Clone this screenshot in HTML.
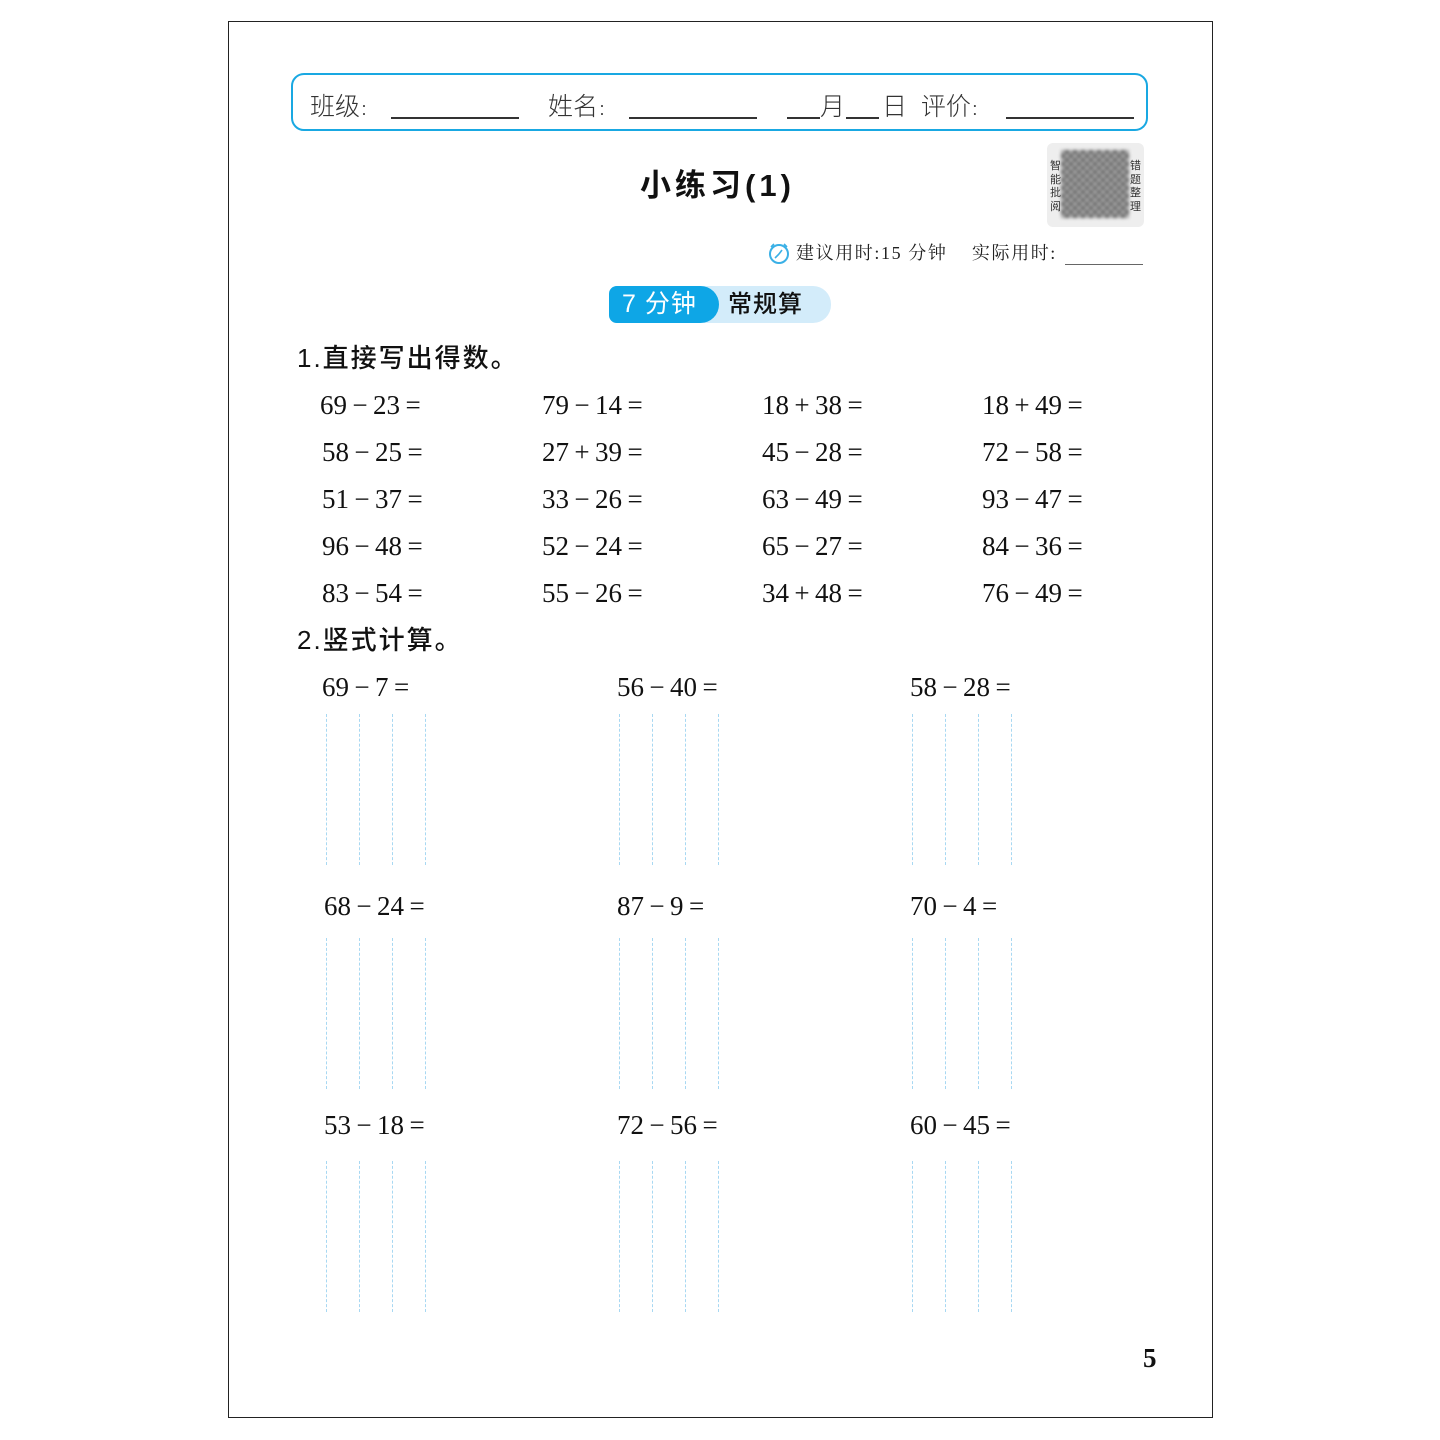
<!DOCTYPE html>
<html><head><meta charset="utf-8"><style>
body{margin:0;width:1440px;height:1440px;background:#fff;position:relative;overflow:hidden;font-family:"Liberation Sans","Noto Sans CJK SC",sans-serif;color:#111}
.a{position:absolute;white-space:nowrap}
.s{font-family:"Liberation Serif","Noto Serif CJK SC",serif;font-size:27px;line-height:30px;color:#111}
.u{position:absolute;height:0;border-top:2px solid #333}
.d{position:absolute;width:0;border-left:1px dashed #a8d8f2}
.h{font-size:25px;line-height:30px;color:#333;font-weight:300}
</style></head><body>
<div class="a" style="left:228px;top:21px;width:983px;height:1395px;border:1px solid #222"></div>
<div class="a" style="left:291px;top:73px;width:853px;height:54px;border:2px solid #19a8e2;border-radius:13px"></div>
<div class="a h" style="left:310px;top:92px">班级<span style="font-size:16px">：</span></div>
<div class="u" style="left:391px;top:117px;width:128px"></div>
<div class="a h" style="left:548px;top:92px">姓名<span style="font-size:16px">：</span></div>
<div class="u" style="left:629px;top:117px;width:128px"></div>
<div class="u" style="left:787px;top:117px;width:33px"></div>
<div class="a h" style="left:820px;top:92px">月</div>
<div class="u" style="left:846px;top:117px;width:33px"></div>
<div class="a h" style="left:882px;top:92px">日&nbsp;&nbsp;评价<span style="font-size:16px">：</span></div>
<div class="u" style="left:1006px;top:117px;width:128px"></div>

<div class="a" style="left:640px;top:166px;font-size:31px;font-weight:bold;line-height:40px;letter-spacing:4px">小练习(1)</div>
<div class="a" style="left:1047px;top:143px;width:97px;height:84px;background:#eee;border-radius:6px"></div>
<div class="a" style="left:1061px;top:150px;width:68px;height:68px;background:repeating-conic-gradient(#666 0 25%,#aaa 0 50%) 0 0/8px 8px;filter:blur(1.5px)"></div>
<div class="a" style="left:1050px;top:160px;font-size:11px;line-height:13.5px;width:12px;white-space:normal;color:#333">智能批阅</div>
<div class="a" style="left:1130px;top:160px;font-size:11px;line-height:13.5px;width:12px;white-space:normal;color:#333">错题整理</div>

<svg class="a" style="left:767px;top:241px" width="24" height="24" viewBox="0 0 24 24"><circle cx="12" cy="13" r="9" fill="none" stroke="#3ab0e6" stroke-width="2"/><path d="M4 6l3-3M20 6l-3-3M12 13l-4 4M12 13l3-4" stroke="#3ab0e6" stroke-width="1.6" fill="none"/></svg>
<div class="a" style="left:796px;top:241px;font-family:'Liberation Serif','Noto Serif CJK SC',serif;font-size:18px;line-height:24px;color:#222;letter-spacing:1.6px">建议用时:15 分钟&nbsp;&nbsp;&nbsp;&nbsp;实际用时:</div>
<div class="u" style="left:1065px;top:264px;width:78px;border-top:1px solid #666"></div>

<div class="a" style="left:609px;top:286px;width:222px;height:37px;background:#d3ecfa;border-radius:18px"></div>
<div class="a" style="left:609px;top:286px;width:110px;height:37px;background:#0ea6e6;border-radius:8px 19px 19px 8px;color:#fff;font-size:25px;line-height:37px;text-indent:13px;letter-spacing:1px">7 分钟</div>
<div class="a" style="left:728px;top:286px;font-size:24px;line-height:37px;color:#111;font-weight:500;letter-spacing:1px">常规算</div>

<div class="a" style="left:297px;top:342px;font-size:26px;line-height:32px;letter-spacing:2px;font-weight:500">1.直接写出得数。</div>
<div class="a" style="left:297px;top:624px;font-size:26px;line-height:32px;letter-spacing:2px;font-weight:500">2.竖式计算。</div>

<div class="a s" style="left:320px;top:390px">69&thinsp;−&thinsp;23&thinsp;=</div><div class="a s" style="left:542px;top:390px">79&thinsp;−&thinsp;14&thinsp;=</div><div class="a s" style="left:762px;top:390px">18&thinsp;+&thinsp;38&thinsp;=</div><div class="a s" style="left:982px;top:390px">18&thinsp;+&thinsp;49&thinsp;=</div>
<div class="a s" style="left:322px;top:437px">58&thinsp;−&thinsp;25&thinsp;=</div><div class="a s" style="left:542px;top:437px">27&thinsp;+&thinsp;39&thinsp;=</div><div class="a s" style="left:762px;top:437px">45&thinsp;−&thinsp;28&thinsp;=</div><div class="a s" style="left:982px;top:437px">72&thinsp;−&thinsp;58&thinsp;=</div>
<div class="a s" style="left:322px;top:484px">51&thinsp;−&thinsp;37&thinsp;=</div><div class="a s" style="left:542px;top:484px">33&thinsp;−&thinsp;26&thinsp;=</div><div class="a s" style="left:762px;top:484px">63&thinsp;−&thinsp;49&thinsp;=</div><div class="a s" style="left:982px;top:484px">93&thinsp;−&thinsp;47&thinsp;=</div>
<div class="a s" style="left:322px;top:531px">96&thinsp;−&thinsp;48&thinsp;=</div><div class="a s" style="left:542px;top:531px">52&thinsp;−&thinsp;24&thinsp;=</div><div class="a s" style="left:762px;top:531px">65&thinsp;−&thinsp;27&thinsp;=</div><div class="a s" style="left:982px;top:531px">84&thinsp;−&thinsp;36&thinsp;=</div>
<div class="a s" style="left:322px;top:578px">83&thinsp;−&thinsp;54&thinsp;=</div><div class="a s" style="left:542px;top:578px">55&thinsp;−&thinsp;26&thinsp;=</div><div class="a s" style="left:762px;top:578px">34&thinsp;+&thinsp;48&thinsp;=</div><div class="a s" style="left:982px;top:578px">76&thinsp;−&thinsp;49&thinsp;=</div>

<div class="a s" style="left:322px;top:672px">69&thinsp;−&thinsp;7&thinsp;=</div><div class="a s" style="left:617px;top:672px">56&thinsp;−&thinsp;40&thinsp;=</div><div class="a s" style="left:910px;top:672px">58&thinsp;−&thinsp;28&thinsp;=</div>
<div class="a s" style="left:324px;top:891px">68&thinsp;−&thinsp;24&thinsp;=</div><div class="a s" style="left:617px;top:891px">87&thinsp;−&thinsp;9&thinsp;=</div><div class="a s" style="left:910px;top:891px">70&thinsp;−&thinsp;4&thinsp;=</div>
<div class="a s" style="left:324px;top:1110px">53&thinsp;−&thinsp;18&thinsp;=</div><div class="a s" style="left:617px;top:1110px">72&thinsp;−&thinsp;56&thinsp;=</div><div class="a s" style="left:910px;top:1110px">60&thinsp;−&thinsp;45&thinsp;=</div>

<div id="g"></div>
<script>
var h='',xs=[326,619,912],ys=[714,938,1161];
ys.forEach(function(y){xs.forEach(function(x){for(var i=0;i<4;i++)h+='<div class="d" style="left:'+(x+i*33)+'px;top:'+y+'px;height:151px"></div>';});});
document.getElementById('g').innerHTML=h;
</script>
<div class="a" style="left:1143px;top:1343px;font-family:'Liberation Serif',serif;font-weight:bold;font-size:27px;line-height:30px">5</div>
</body></html>
